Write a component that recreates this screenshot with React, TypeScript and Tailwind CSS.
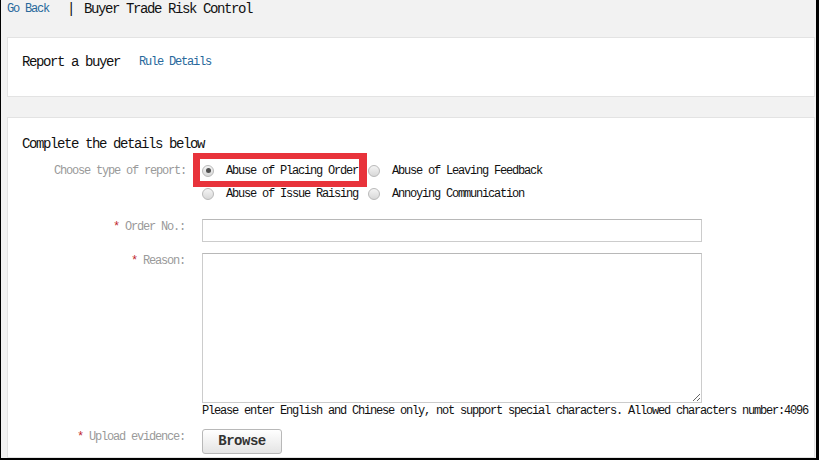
import type { ReactNode } from "react";

const reportTypes = [
  { label: "Abuse of Placing Order", checked: true },
  { label: "Abuse of Leaving Feedback", checked: false },
  { label: "Abuse of Issue Raising", checked: false },
  { label: "Annoying Communication", checked: false },
];

function Radio({ checked }: { checked: boolean }) {
  return (
    <span className="flex h-3 w-3 shrink-0 items-center justify-center rounded-full border border-[#b9b9b9] bg-gradient-to-b from-[#f4f4f4] to-[#d8d8d8]">
      {checked && <span className="h-[5px] w-[5px] rounded-full bg-[#505050]" />}
    </span>
  );
}

function FieldLabel({ children, required }: { children: ReactNode; required?: boolean }) {
  return (
    <div className="w-[178px] shrink-0 pr-px text-right text-[12px] leading-4 tracking-[-1.2px] text-[#9a9a9a]">
      {required && <span className="text-[#c0262c]">* </span>}
      {children}
    </div>
  );
}

export default function App() {
  return (
    <div className="flex h-[460px] w-[819px] flex-col overflow-hidden border-b-2 border-l border-r-[3px] border-black bg-[#f2f2f2] pl-[6px] pr-px font-['Liberation_Mono',monospace] text-[#111]">
      <header className="flex h-[18px] shrink-0 items-center">
        <a className="text-[12px] tracking-[-1.2px] text-[#27689b]">Go Back</a>
        <span className="ml-[18px] text-[14px] tracking-[-1.4px]">|</span>
        <span className="ml-[10px] text-[14px] tracking-[-1.4px]">Buyer Trade Risk Control</span>
      </header>

      <section className="mt-[19px] flex h-[60px] shrink-0 items-center border border-[#e3e3e3] bg-white pb-[10px] pl-[14px]">
        <h1 className="text-[14px] leading-5 tracking-[-1.4px]">Report a buyer</h1>
        <a className="ml-[19px] text-[12px] leading-5 tracking-[-1.2px] text-[#27689b]">Rule Details</a>
      </section>

      <section className="mt-[20px] flex-1 border border-[#e3e3e3] bg-white pt-4">
        <h2 className="pl-[14px] text-[14px] leading-5 tracking-[-1.4px]">Complete the details below</h2>

        <div className="mt-[5px] flex">
          <div className="flex h-[23px] w-[178px] shrink-0 items-center justify-end text-[12px] tracking-[-1.2px] text-[#9a9a9a]">
            Choose type of report:
          </div>
          <div className="ml-4 grid grid-cols-[166px_auto]">
            {reportTypes.map((t, i) => (
              <label key={t.label} className="relative flex h-[23px] items-center">
                <Radio checked={t.checked} />
                <span className="ml-3 text-[12px] tracking-[-1.2px]">{t.label}</span>
                {i === 0 && (
                  <span className="pointer-events-none absolute -top-[6px] -left-[9px] h-[34px] w-[174px] border-t-[6px] border-r-[8px] border-b-[6px] border-l-[7px] border-[#e8333b]" />
                )}
              </label>
            ))}
          </div>
        </div>

        <div className="mt-[14px] flex">
          <FieldLabel required>Order No.:</FieldLabel>
          <input className="ml-4 h-[23px] w-[500px] border border-[#cccccc] border-t-[#b8b8b8] bg-white outline-none" />
        </div>

        <div className="mt-[11px] flex">
          <FieldLabel required>Reason:</FieldLabel>
          <div className="ml-4">
            <textarea className="block h-[150px] w-[500px] border border-[#cccccc] border-t-[#b8b8b8] bg-white outline-none" />
            <p className="text-[12px] leading-4 tracking-[-1.2px]">
              Please enter English and Chinese only, not support special characters. Allowed characters number:4096
            </p>
          </div>
        </div>

        <div className="mt-[10px] flex">
          <FieldLabel required>Upload evidence:</FieldLabel>
          <button className="ml-4 flex h-[25px] w-[80px] items-center justify-center rounded-[3px] border border-[#b8b8b8] bg-gradient-to-b from-white to-[#e4e4e4] text-[14px] font-bold tracking-[-0.5px] text-[#333]">
            Browse
          </button>
        </div>
      </section>
    </div>
  );
}
